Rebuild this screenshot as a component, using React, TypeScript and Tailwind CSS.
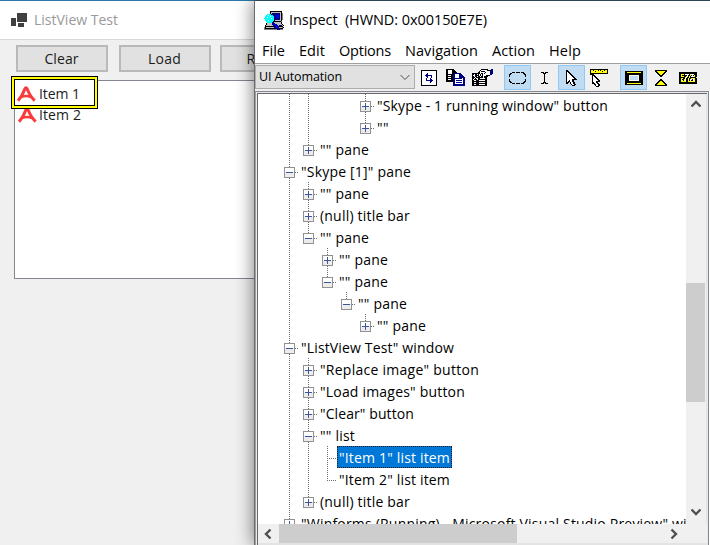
import { useLayoutEffect, useRef, useState } from "react";
import type { ReactNode } from "react";

/* Text whose tracking is adjusted so that it fills a given width. */
function Fit({ width, className = "", children }: { width: number; className?: string; children: string }) {
  const ref = useRef<HTMLSpanElement>(null);
  const [spacing, setSpacing] = useState(0);
  useLayoutEffect(() => {
    const el = ref.current;
    if (el) {
      setSpacing((width - el.getBoundingClientRect().width) / children.length);
    }
  }, []);
  return (
    <span ref={ref} className={`inline-block shrink-0 whitespace-pre ${className}`} style={{ letterSpacing: spacing }}>
      {children}
    </span>
  );
}

const PALETTE: Record<string, string> = {
  "#": "#000000",
  b: "#000080",
  w: "#ffffff",
  y: "#ffff00",
  c: "#00ffff",
  g: "#808080",
  s: "#c0c0c0",
  l: "#c0dcf3",
  u: "#0000ff",
};

function PixelIcon({ rows }: { rows: string[] }) {
  const w = Math.max(...rows.map((r) => r.length));
  return (
    <svg width={w} height={rows.length} shapeRendering="crispEdges" className="block shrink-0">
      {rows.flatMap((row, y) =>
        [...row].map((ch, x) =>
          PALETTE[ch] ? <rect key={`${x}-${y}`} x={x} y={y} width="1" height="1" fill={PALETTE[ch]} /> : null,
        ),
      )}
    </svg>
  );
}

const REFRESH = [
  "################",
  "#wwwwwwwwwwwwww#",
  "#wwwwwwwwwwwwww#",
  "#wwwwwbwwwwwwww#",
  "#wwwwbbwwwwwwww#",
  "#wwwbbbbbbbwwww#",
  "#wwwwbbwwwbwwww#",
  "#wwwwwbwwwbwwww#",
  "#wwwwbwwwbwwwww#",
  "#wwwwbwwwbbwwww#",
  "#wwwwbbbbbbbwww#",
  "#wwwwwwwwbbwwww#",
  "#wwwwwwwwbwwwww#",
  "#wwwwwwwwwwwwww#",
  "#wwwwwwwwwwwwww#",
  "################",
];
const COPY = [
  "########...........",
  "##wwww###..........",
  "##wwww####.........",
  "##wwww#####........",
  "##wwww#bbbbbbbb....",
  "#######bbwwwwbbb...",
  "##www##bbwwwwbbbb..",
  "#######bbwwwwbbbbb.",
  "##www##bbwwwwbbbbbb",
  "#######bbbbbbbbbwbb",
  "##www##bbwwwwwwwwbb",
  "#######bbwbbbbbbwbb",
  "#######bbwwwwwwwwbb",
  ".......bbwbbbbbbwbb",
  ".......bbwwwwwwwwbb",
  ".......bbbbbbbbbbbb",
  ".......bbbbbbbbbbbb",
];
const PROPS = [
  ".........#######...bb",
  "........#wwwwww###bbb",
  ".......#w####wwwwwbbb",
  "......##wwwww#wwwwbbb",
  "########w##w#wwwwwbbb",
  "##w##w#w#w#wwwwwwwbb.",
  "#ww####w#w#www####...",
  "##w##w##w##w####.....",
  "###w#######w###......",
  "##w#ww##wwwww##......",
  "#w###w#########......",
  "##ww###wwwwww##......",
  "###############......",
  "##ww###wwwwww##......",
  "###############......",
  "##ww###wwwwww##......",
  "###############......",
];
const MARQUEE = [
  "...###.####.###..",
  ".##...........##.",
  "##.............##",
  "#...............#",
  "#...............#",
  ".................",
  ".................",
  "#...............#",
  "#...............#",
  "##.............##",
  ".##...........##.",
  "...###.####.###..",
];
const CARET = [
  "###.###",
  "..###..",
  "...#...",
  "...#...",
  "...#...",
  "...#...",
  "...#...",
  "...#...",
  "...#...",
  "...#...",
  "..###..",
  "###.###",
];
const POINTER = [
  "##.........",
  "###........",
  "#w##.......",
  "#ww##......",
  "#www##.....",
  "#wwww##....",
  "#wwwww##...",
  "#wwwwww##..",
  "#wwwwwww##.",
  "#wwwww#####",
  "#ww#ww##...",
  "#w##ww##...",
  "###.#ww##..",
  "##..#ww##..",
  ".....#ww##.",
  "......###..",
];
const TIP_POINTER = [
  "##################",
  "#yy#yyyy#y#yyy#yy#",
  "#yyyy#yyyyyy#yyyy#",
  "#yyyyyyyyyyyyyyyy#",
  "##################",
  "####..............",
  "..###.............",
  "..#w##............",
  "..#ww##...........",
  "..#www##..........",
  "..#wwww##.........",
  "..#wwwww##........",
  "..#www####........",
  "..##ww##..........",
  "..###ww##.........",
  "....##ww##........",
  ".....#ww##........",
  "......###.........",
];
const FOCUS_RECT = [
  "##################",
  "##yyyyyyyyyyyyyy##",
  "##################",
  "##################",
  "####wwwwwwwwww####",
  "####wllllllllw####",
  "####wllllllllw####",
  "####wllllllllw####",
  "####wllllllllw####",
  "####wwwwwwwwww####",
  "##################",
  "##################",
  "##yyyyyyyyyyyyyy##",
  "##################",
];
const HOURGLASS = [
  "############",
  "##yyyyyyyy##",
  ".##yyyyyy##.",
  "..##yyyy##..",
  "...##yy##...",
  "....####....",
  ".....##.....",
  "............",
  "............",
  ".....##.....",
  "....####....",
  "...##yy##...",
  "..##yyyy##..",
  ".##yyyyyy##.",
  "##yyyyyyyy##",
  "############",
];
const TOOLTIP = [
  "##################",
  "##################",
  "##yyy#wwww#ywww###",
  "##y#####w##y#w#y##",
  "##yyy##yw#y#wwwy##",
  "######yw##y######.",
  "##yy##w##y##yywy##",
  "##y##yw##y#ww#wy##",
  "##yy#yw##y#w##wy##",
  "##yyyyy##yyyyyyy##",
  "##################",
  "##################",
];
const INSPECT = [
  "......############..",
  "......#ssssssssss#..",
  "......#sbbbbbbbbs#g.",
  "...cccc#bbbbbbbbs#g.",
  "..ccwccccbbbuuubs#g.",
  ".cccccwcccbbuuubs#g.",
  ".ccwccccccbbbuubs#g.",
  "cccccccwccbbbbbbs#g.",
  ".cccccccccbbbbbbs#g.",
  ".cccwccccc#ssssss#..",
  "..ccccccc########g..",
  "...cccccbbsssssss#..",
  "..#sssssbbbssssss#..",
  "..#sssssbbuubsssss#.",
  ".#sssssssbbuubsbbbs#",
  ".#########bbuub####.",
  "g#ssssssssbbuubsssg#",
  "g##########bbbb####.",
  "gggggggggggggbbbggg.",
];

function ToolButton({ active = false, children }: { active?: boolean; children: ReactNode }) {
  return (
    <div
      className={`flex h-[25px] w-[27px] shrink-0 items-center justify-center border ${
        active ? "border-[#90c8f6] bg-[#c0dcf3]" : "border-transparent"
      }`}
    >
      {children}
    </div>
  );
}

/* guides: "|" line passes, " " empty; the last cell is "+" / "-" / "l" (leaf) */
type Row = { guides: string; end?: "last"; text: string; width: number; selected?: boolean };

const TREE: Row[] = [
  { guides: "||  +", text: '"Skype - 1 running window" button', width: 231 },
  { guides: "||  +", end: "last", text: '""', width: 12 },
  { guides: "|+", end: "last", text: '"" pane', width: 49 },
  { guides: "-", text: '"Skype [1]" pane', width: 110 },
  { guides: "|+", text: '"" pane', width: 49 },
  { guides: "|+", text: "(null) title bar", width: 90 },
  { guides: "|-", end: "last", text: '"" pane', width: 49 },
  { guides: "| +", text: '"" pane', width: 49 },
  { guides: "| -", end: "last", text: '"" pane', width: 49 },
  { guides: "|  -", end: "last", text: '"" pane', width: 49 },
  { guides: "|   +", end: "last", text: '"" pane', width: 49 },
  { guides: "-", text: '"ListView Test" window', width: 153 },
  { guides: "|+", text: '"Replace image" button', width: 159 },
  { guides: "|+", text: '"Load images" button', width: 145 },
  { guides: "|+", text: '"Clear" button', width: 94 },
  { guides: "|-", text: '"" list', width: 35 },
  { guides: "||l", text: '"Item 1" list item', width: 111, selected: true },
  { guides: "||l", end: "last", text: '"Item 2" list item', width: 111 },
  { guides: "|+", end: "last", text: "(null) title bar", width: 90 },
  { guides: "+", text: '"Winforms (Running) - Microsoft Visual Studio Preview" window', width: 423 },
];

function Guide({ kind, last }: { kind: string; last: boolean }) {
  const node = kind !== "|" && kind !== " ";
  return (
    <svg width="19" height="22" shapeRendering="crispEdges" className="block shrink-0">
      {kind !== " " && (
        <line x1="9.5" x2="9.5" y1="0" y2={node && last ? 13 : 22} stroke="#6d6d6d" strokeDasharray="1 1" />
      )}
      {node && <line x1="9" x2="19" y1="12.5" y2="12.5" stroke="#6d6d6d" strokeDasharray="1 1" />}
      {(kind === "+" || kind === "-") && (
        <>
          <rect x="4.5" y="7.5" width="10" height="10" fill="#ececec" stroke="#919191" />
          <rect x="5" y="8" width="9" height="4" fill="#ffffff" />
          <rect x="6" y="12" width="7" height="1" fill="#3b569f" />
          {kind === "+" && <rect x="9" y="9" width="1" height="7" fill="#3b569f" />}
        </>
      )}
    </svg>
  );
}

function TreeRow({ row }: { row: Row }) {
  const cells = [...row.guides];
  return (
    <div className="flex h-[22px] shrink-0 items-center pl-[22px]">
      {cells.map((k, i) => (
        <Guide key={i} kind={k} last={i === cells.length - 1 && row.end === "last"} />
      ))}
      <div
        className={`flex h-[22px] items-start px-[2px] pt-px ${
          row.selected ? "bg-[#0078d7] text-white outline-1 -outline-offset-1 outline-dotted outline-[#1b1b1b]" : ""
        }`}
      >
        <Fit width={row.width} className="text-[14px] leading-[22px]">
          {row.text}
        </Fit>
      </div>
    </div>
  );
}

function Chevron({ d }: { d: string }) {
  return (
    <svg width="12" height="12" viewBox="0 0 12 12" fill="none" stroke="#505050" strokeWidth="2.4" className="block">
      <path d={d} />
    </svg>
  );
}

function RedA() {
  return (
    <svg width="19" height="16" viewBox="0 0 19 16" fill="none" stroke="#fb3b3b" className="block shrink-0">
      <path d="M1 14.6C4 11.500 6.300 7 7.800 3Q9 .6 10.200 3C12 7.500 14.200 11.500 17.700 14.600" strokeWidth="3" />
      <path d="M4 11Q9 9 14 11" strokeWidth="2.700" />
    </svg>
  );
}

function FormButton({ label, width, className }: { label: string; width: number; className: string }) {
  return (
    <div
      className={`flex h-[27px] shrink-0 items-center justify-center border-2 border-[#b9b9b9] bg-[#e1e1e1] pr-px ${className}`}
    >
      <Fit width={width} className="text-[14px] leading-5">
        {label}
      </Fit>
    </div>
  );
}

function ListViewWindow() {
  return (
    <div className="absolute bottom-0 left-0 top-0 flex w-[255px] flex-col overflow-hidden border-t border-[#2b78a8] bg-[#f0f0f0] text-[#1c1c1c]">
      <div className="flex h-[38px] shrink-0 items-center bg-white pl-[11px] text-[#999999]">
        <svg width="17" height="15" shapeRendering="crispEdges" className="mr-[6px] block" fill="#404040">
          <rect x="6" y="0" width="10" height="9" />
          <rect x="0" y="5" width="5" height="8" />
          <rect x="7" y="10" width="6" height="4" />
        </svg>
        <Fit width={84} className="text-[14px] leading-5">
          ListView Test
        </Fit>
      </div>
      <div className="h-px shrink-0 bg-[#d4d8da]" />
      <div className="flex h-[40px] shrink-0 pl-[16px] pt-[5px]">
        <FormButton label="Clear" width={34} className="w-[92px]" />
        <FormButton label="Load" width={33} className="ml-[11px] w-[92px]" />
        <FormButton label="Replace image" width={92} className="ml-[9px] w-[146px]" />
      </div>
      <div className="ml-[14px] flex h-[199px] w-[300px] shrink-0 flex-col border border-[#828790] bg-white pl-[3px] pt-[24px]">
        <div className="flex h-[20px] items-center">
          <RedA />
          <Fit width={42} className="ml-[2px] text-[14px] leading-5">
            Item 2
          </Fit>
        </div>
      </div>
      <div className="absolute left-[11px] top-[75px] border border-black bg-black">
        <div className="h-[31px] w-[85px] border-2 border-[#ffff00] bg-white">
          <div className="flex h-[27px] w-[81px] items-center border border-black pl-[2px] pt-[2px]">
            <RedA />
            <Fit width={41} className="ml-[3px] text-[14px] leading-5">
              Item 1
            </Fit>
          </div>
        </div>
      </div>
    </div>
  );
}

function InspectWindow() {
  return (
    <div className="absolute bottom-0 left-[254px] right-0 top-0 flex flex-col border-l border-t border-l-[#6a6e74] border-t-[#2b4557] bg-white text-black shadow-[-2px_0_16px_rgba(0,0,0,0.45)]">
      <div className="flex h-[38px] shrink-0 items-center pl-[9px]">
        <PixelIcon rows={INSPECT} />
        <Fit width={198} className="ml-[5px] text-[14.5px] leading-5">
          {"Inspect  (HWND: 0x00150E7E)"}
        </Fit>
      </div>
      <div className="flex h-[24px] shrink-0 items-center gap-[14px] pl-[7px] text-[14.5px] leading-5">
        <Fit width={23}>File</Fit>
        <Fit width={26}>Edit</Fit>
        <Fit width={52}>Options</Fit>
        <Fit width={73}>Navigation</Fit>
        <Fit width={43}>Action</Fit>
        <Fit width={32}>Help</Fit>
      </div>
      <div className="h-px shrink-0 bg-[#a0a0a0]" />
      <div className="flex h-[27px] shrink-0 items-start bg-[#f0f0f0] pt-px">
        <div className="flex h-[24px] w-[160px] shrink-0 items-center justify-between border border-[#adadad] bg-[#e1e1e1] pl-[3px] pr-[4px]">
          <Fit width={83} className="text-[12.5px] leading-5">
            UI Automation
          </Fit>
          <svg width="10" height="7" fill="none" stroke="#505050" className="block">
            <path d="M.5 1 5 5.500 9.500 1" />
          </svg>
        </div>
        <div className="flex">
          <ToolButton><PixelIcon rows={REFRESH} /></ToolButton>
          <ToolButton><PixelIcon rows={COPY} /></ToolButton>
          <ToolButton><PixelIcon rows={PROPS} /></ToolButton>
        </div>
        <div className="ml-[8px] flex">
          <ToolButton active><PixelIcon rows={MARQUEE} /></ToolButton>
          <ToolButton><PixelIcon rows={CARET} /></ToolButton>
          <ToolButton active><PixelIcon rows={POINTER} /></ToolButton>
          <ToolButton><PixelIcon rows={TIP_POINTER} /></ToolButton>
        </div>
        <div className="ml-[8px] flex">
          <ToolButton active><PixelIcon rows={FOCUS_RECT} /></ToolButton>
          <ToolButton><PixelIcon rows={HOURGLASS} /></ToolButton>
          <ToolButton><PixelIcon rows={TOOLTIP} /></ToolButton>
        </div>
      </div>
      <div className="mr-px flex min-h-0 flex-1 flex-col border-l border-r border-t border-l-[#a0a0a0] border-r-[#828790] border-t-[#828790]">
        <div className="flex min-h-0 flex-1 flex-col border border-b-0 border-[#e9e9e9]">
          <div className="flex min-h-0 flex-1 flex-col border-l border-t border-[#696969]">
            <div className="flex h-[430px] shrink-0">
              <div className="flex h-[430px] min-w-0 flex-1 flex-col overflow-hidden">
                {TREE.map((row, i) => (
                  <TreeRow key={i} row={row} />
                ))}
              </div>
              <div className="flex w-[21px] shrink-0 flex-col items-start border-r border-[#e3e3e3] bg-[#f0f0f0]">
                <div className="flex h-[20px] w-[19px] items-center justify-center"><Chevron d="M1.500 8.500 6 4 10.500 8.500" /></div>
                <div className="mt-[169px] h-[119px] w-[19px] bg-[#cdcdcd]" />
                <div className="mt-auto flex h-[24px] w-[19px] items-center justify-center"><Chevron d="M1.500 3.500 6 8 10.500 3.500" /></div>
              </div>
            </div>
            <div className="flex h-[19px] shrink-0 items-center bg-[#f0f0f0]">
              <div className="flex w-[21px] justify-center pr-[2px]"><Chevron d="M8.500 1.500 4 6 8.500 10.500" /></div>
              <div className="h-[19px] w-[238px] bg-[#cdcdcd]" />
              <div className="ml-[151px] flex w-[12px] justify-center"><Chevron d="M3.500 1.500 8 6 3.500 10.500" /></div>
            </div>
            <div className="h-[2px] bg-[#e3e3e3]" />
          </div>
        </div>
      </div>
    </div>
  );
}

export default function App() {
  return (
    <div className="relative h-[545px] w-[710px] overflow-hidden font-['Open_Sans','Noto_Sans',sans-serif]">
      <ListViewWindow />
      <InspectWindow />
    </div>
  );
}
